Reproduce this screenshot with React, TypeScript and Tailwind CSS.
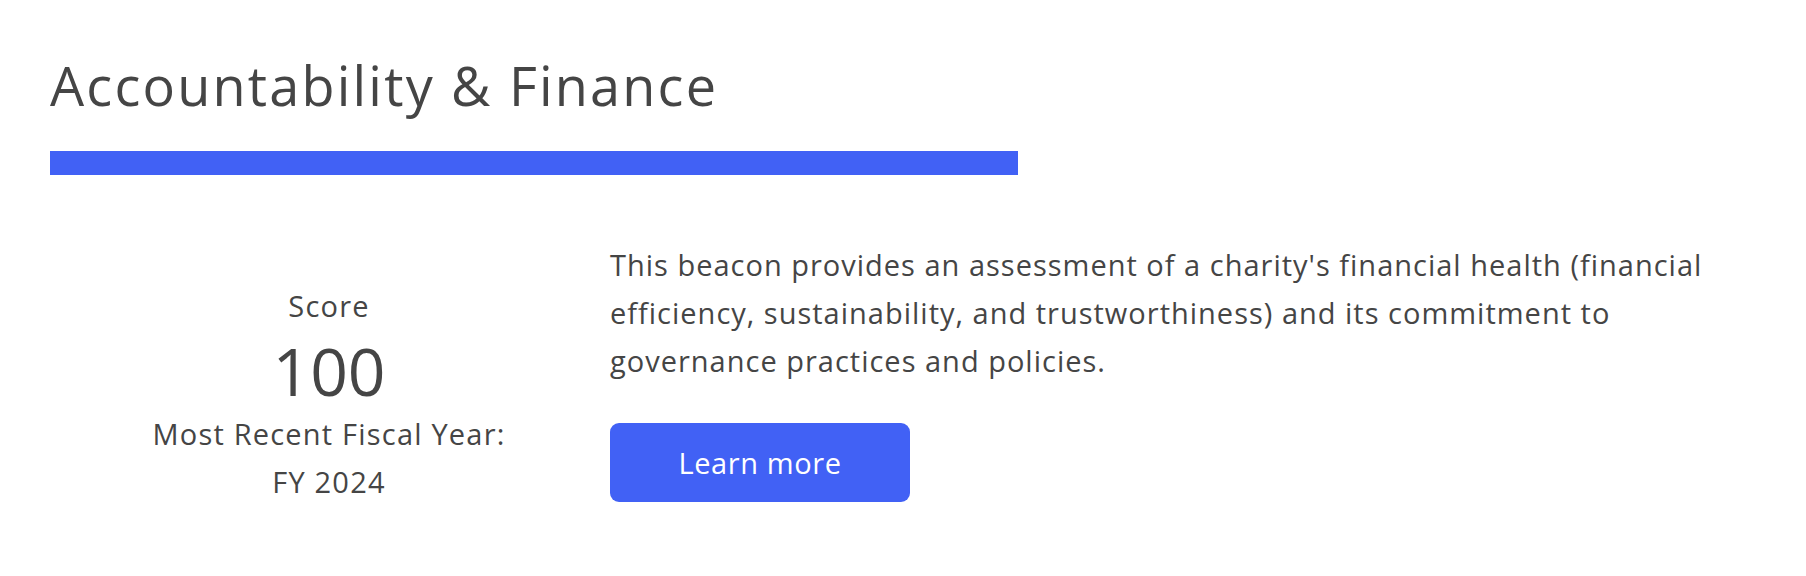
export default function App() {
  return (
    <div className="min-h-screen bg-white text-[#454545] font-['Open_Sans',sans-serif]">
      <section className="pl-[50px] pt-[53px]">
        {/* Heading */}
        <h2 className="text-[54px] leading-[64px] font-normal tracking-[2.2px]">
          Accountability &amp; Finance
        </h2>
        <div className="mt-[34px] h-[24px] w-[968px] bg-[#4161f5]" />

        {/* Body */}
        <div className="mt-[66px] flex items-start">
          <div className="mt-[41px] w-[558px] text-center text-[29px] leading-[48px] tracking-[1.2px]">
            <div>Score</div>
            <div className="text-[66px] leading-[80px] tracking-normal">100</div>
            <div>Most Recent Fiscal Year:</div>
            <div>FY 2024</div>
          </div>

          <div className="ml-[2px] w-[1125px]">
            <p className="text-[29px] leading-[48px] tracking-[1px]">
              This beacon provides an assessment of a charity's financial health (financial
              efficiency, sustainability, and trustworthiness) and its commitment to
              governance practices and policies.
            </p>
            <button className="mt-[38px] h-[79px] w-[300px] rounded-[9px] bg-[#4161f5] text-[29px] tracking-[0.6px] text-white">
              Learn more
            </button>
          </div>
        </div>
      </section>
    </div>
  )
}
